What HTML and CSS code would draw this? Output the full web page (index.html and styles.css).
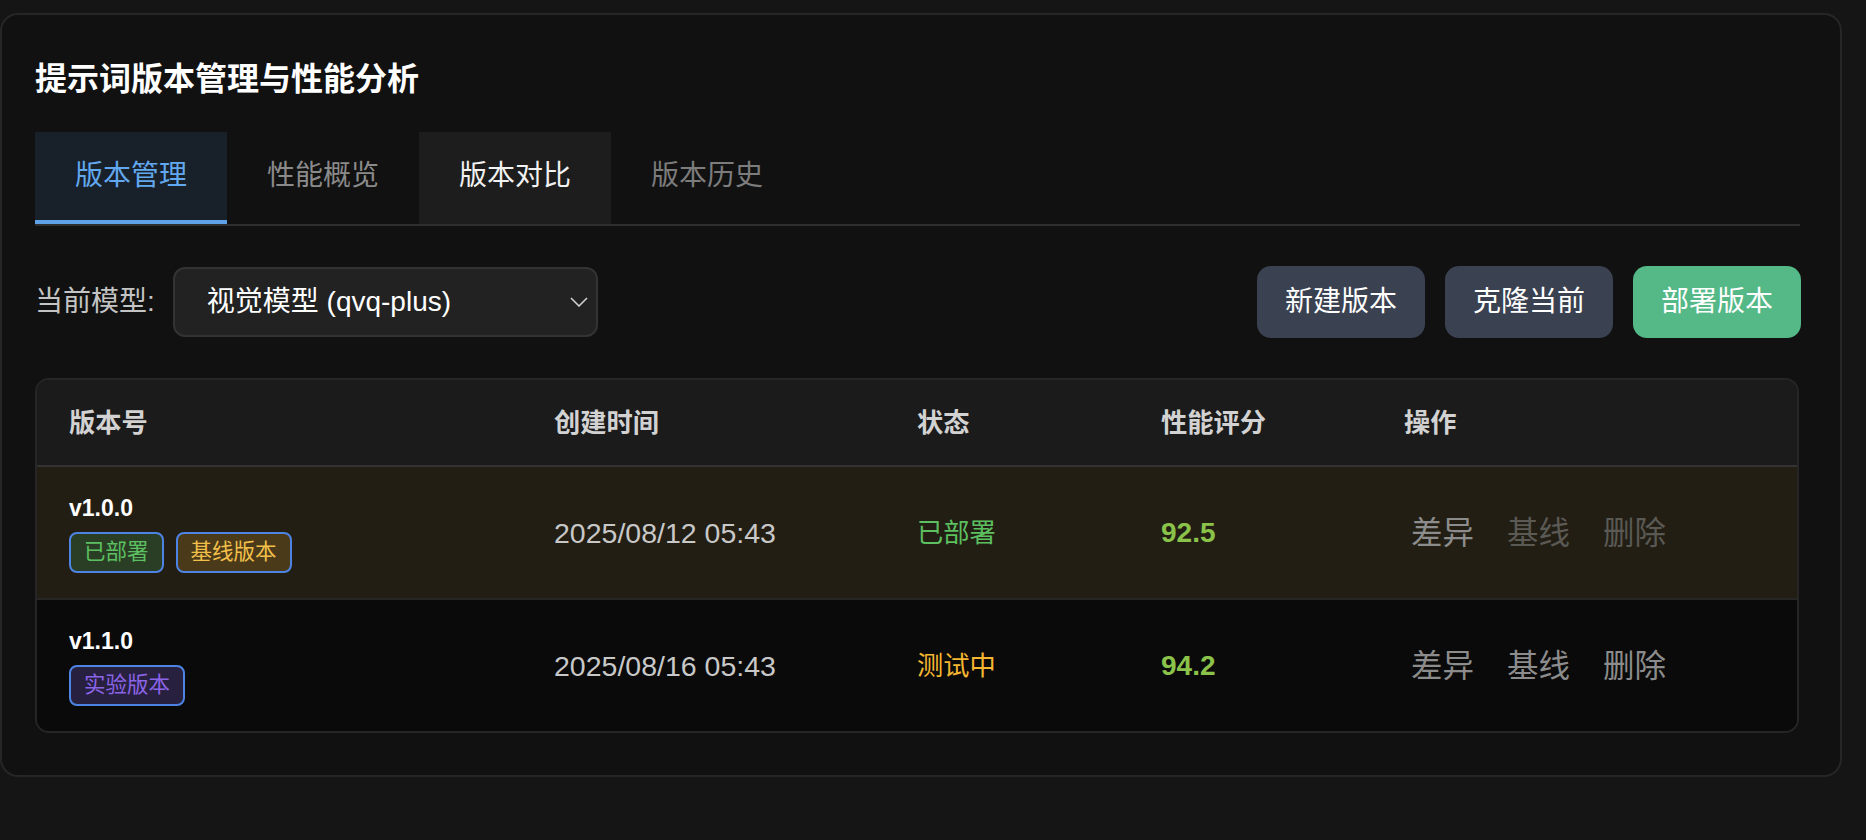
FILE: index.html
```html
<!DOCTYPE html>
<html lang="zh-CN">
<head>
<meta charset="utf-8">
<title>提示词版本管理与性能分析</title>
<link rel="stylesheet" href="styles.css">
</head>
<body>
<section class="card">
  <h1 class="title">提示词版本管理与性能分析</h1>
  <nav class="tabs">
    <div class="tab active">版本管理</div>
    <div class="tab">性能概览</div>
    <div class="tab hover">版本对比</div>
    <div class="tab dim">版本历史</div>
  </nav>
  <div class="toolbar">
    <div class="model">
      <span class="model-label">当前模型:</span>
      <div class="select">
        <span class="select-text">视觉模型 (qvq-plus)</span>
        <svg class="chevron" width="18" height="10" viewBox="0 0 18 10"><path d="M1 1 L9 9 L17 1" fill="none" stroke="#cfcfcf" stroke-width="1.6"/></svg>
      </div>
    </div>
    <div class="actions">
      <button class="btn">新建版本</button>
      <button class="btn">克隆当前</button>
      <button class="btn primary">部署版本</button>
    </div>
  </div>
  <div class="table">
    <div class="row head">
      <div class="cell">版本号</div>
      <div class="cell">创建时间</div>
      <div class="cell">状态</div>
      <div class="cell">性能评分</div>
      <div class="cell">操作</div>
    </div>
    <div class="row baseline">
      <div class="cell ver">
        <div class="ver-name">v1.0.0</div>
        <div class="tags">
          <span class="tag green">已部署</span>
          <span class="tag yellow">基线版本</span>
        </div>
      </div>
      <div class="cell date">2025/08/12 05:43</div>
      <div class="cell status deployed">已部署</div>
      <div class="cell score">92.5</div>
      <div class="cell ops">
        <span class="op">差异</span>
        <span class="op disabled">基线</span>
        <span class="op disabled">删除</span>
      </div>
    </div>
    <div class="row plain">
      <div class="cell ver">
        <div class="ver-name">v1.1.0</div>
        <div class="tags">
          <span class="tag purple">实验版本</span>
        </div>
      </div>
      <div class="cell date">2025/08/16 05:43</div>
      <div class="cell status testing">测试中</div>
      <div class="cell score">94.2</div>
      <div class="cell ops">
        <span class="op">差异</span>
        <span class="op">基线</span>
        <span class="op">删除</span>
      </div>
    </div>
  </div>
</section>
</body>
</html>
```
FILE: styles.css
```css
* { box-sizing: border-box; }
html, body {
  margin: 0;
  background: #151515;
}
body {
  padding-top: 13px;
  font-family: "Liberation Sans", "Noto Sans CJK SC", sans-serif;
  color: #e8e8e8;
}
.card {
  width: 1842px;
  background: #111111;
  border: 2px solid #262626;
  border-radius: 18px;
  padding: 42px 40px 42px 33px;
}
.title {
  margin: 0 0 31px 0;
  font-size: 32px;
  line-height: 44px;
  font-weight: 700;
  color: #ffffff;
}
.tabs {
  display: flex;
  border-bottom: 2px solid #2e2e2e;
}
.tab {
  width: 192px;
  height: 92px;
  line-height: 88px;
  text-align: center;
  font-size: 28px;
  color: #8a8a8a;
  border-bottom: 4px solid transparent;
}
.tab.active {
  background: #18202a;
  color: #62a8ef;
  border-bottom-color: #5ea1e6;
}
.tab.hover {
  background: #1d1d1d;
  color: #f2f2f2;
}
.tab.dim { color: #7c7c7c; }
.toolbar {
  margin-top: 40px;
  display: flex;
  justify-content: space-between;
  align-items: center;
  height: 72px;
}
.model {
  display: flex;
  align-items: center;
  gap: 18px;
}
.model-label {
  font-size: 28px;
  line-height: 40px;
  color: #c4c4c4;
}
.select {
  width: 425px;
  height: 70px;
  background: #222222;
  border: 2px solid #333333;
  border-radius: 12px;
  display: flex;
  align-items: center;
  padding: 0 8px 0 32px;
}
.select-text {
  font-size: 28px;
  line-height: 40px;
  color: #ffffff;
}
.chevron { margin-left: auto; }
.actions {
  display: flex;
  gap: 20px;
  margin-right: -1px;
}
.btn {
  width: 168px;
  height: 72px;
  border: none;
  border-radius: 14px;
  background: #3a4151;
  color: #ffffff;
  font-family: inherit;
  font-size: 28px;
  line-height: 40px;
  padding: 0;
}
.btn.primary { background: #54b887; }
.table {
  margin-top: 40px;
  width: 1764px;
  border: 2px solid #262626;
  border-radius: 14px;
  overflow: hidden;
}
.row {
  display: grid;
  grid-template-columns: 485px 363px 244px 243px 1fr;
  align-items: center;
}
.cell { padding-left: 32px; }
.row.head {
  height: 87px;
  background: #1b1b1b;
  border-bottom: 2px solid #333333;
  font-size: 26.25px;
  line-height: 36px;
  font-weight: 700;
  color: #d2d2d2;
}
.row.baseline {
  height: 133px;
  background: #221e14;
  border-bottom: 2px solid #262626;
}
.row.plain {
  height: 131px;
  background: #0a0a0a;
}
.ver-name {
  font-size: 23px;
  line-height: 32px;
  font-weight: 700;
  color: #ffffff;
}
.tags {
  display: flex;
  gap: 12px;
  margin-top: 8px;
}
.tag {
  font-size: 21.5px;
  line-height: 37px;
  padding: 0 13px;
  border: 2px solid #4d84e3;
  border-radius: 8px;
}
.tag.green { background: #2a3e25; color: #5cc060; }
.tag.yellow { background: #4a3a19; color: #f2c04a; }
.tag.purple { background: #28203f; color: #8b64e8; }
.date {
  font-size: 28.5px;
  line-height: 40px;
  color: #c8c8c8;
}
.status {
  font-size: 26.25px;
  line-height: 40px;
}
.status.deployed { color: #5cbf60; }
.status.testing { color: #f5b731; }
.score {
  font-size: 28px;
  line-height: 40px;
  font-weight: 700;
  color: #8bc34a;
}
.ops {
  display: flex;
  gap: 19px;
}
.op {
  font-size: 31.5px;
  line-height: 44px;
  padding: 0 7px;
  color: #8c8c8c;
}
.op.disabled { color: #5a5954; }
```
